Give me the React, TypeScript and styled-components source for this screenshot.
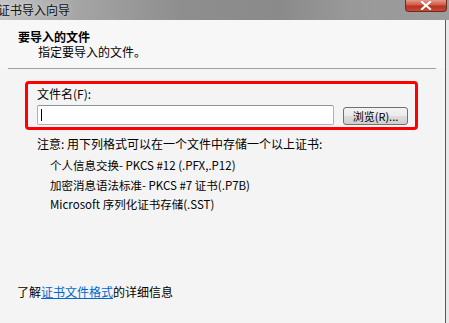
import React from 'react';
import styled, { createGlobalStyle } from 'styled-components';

// == styles =======================================================================================
const GlobalStyle = createGlobalStyle`
  html, body {
    margin: 0;
    padding: 0;
    background: #f2f2f2;
  }
  body {
    font-family: "Noto Sans CJK SC", "Liberation Sans", sans-serif;
    font-size: 12px;
    color: #000;
  }
`;

const Window = styled.div`
  width: 449px;
  height: 323px;
  display: flex;
  flex-direction: column;
  overflow: hidden;
`;

const TitleBar = styled.div`
  height: 20px;
  flex: 0 0 20px;
  display: flex;
  align-items: flex-start;
  background: linear-gradient( 90deg, #c4c4c4 0%, #a4a4a4 18%, #8e8e8e 40%, #8a8a8a 62%, #999 78%, #9c9c9c 100% );
`;

const Title = styled.div`
  margin-left: -2px;
  line-height: 20px;
  font-size: 12px;
  color: #111;
  text-shadow: 0 0 4px rgba( 255, 255, 255, 0.6 );
`;

const CloseButton = styled.div`
  margin-left: auto;
  margin-right: 2px;
  width: 42px;
  height: 12px;
  display: flex;
  align-items: center;
  justify-content: center;
  border: 1px solid #6b2a22;
  border-top: none;
  border-radius: 0 0 4px 4px;
  background: linear-gradient( 180deg, #e49a8c 0%, #d05a48 45%, #b8321e 55%, #c94a35 100% );
  box-sizing: border-box;
`;

const Frame = styled.div`
  flex: 1;
  display: flex;
`;

const Page = styled.div`
  flex: 1;
  display: flex;
  flex-direction: column;
  background: #f4f4f4;
  border-right: 1px solid #5a5a5a;
`;

const RightEdge = styled.div`
  width: 3px;
  background: #e8e8e8;
`;

const Header = styled.div`
  height: 48px;
  box-sizing: border-box;
  padding: 11px 0 0 18px;
  background: #f7f7f7;
`;

const HeaderTitle = styled.div`
  font-weight: bold;
  line-height: 12px;
`;

const HeaderSub = styled.div`
  margin: 3px 0 0 20px;
  line-height: 12px;
`;

const Separator = styled.div`
  height: 1px;
  margin: 0 9px 0 8px;
  background: #a0a0a0;
`;

const Body = styled.div`
  display: flex;
  flex-direction: column;
  padding: 12px 0 0 25px;
`;

const Highlight = styled.div`
  width: 393px;
  height: 49px;
  box-sizing: border-box;
  border: 3px solid #ff0000;
  border-radius: 4px;
  padding: 3px 0 0 9px;
`;

const FieldLabel = styled.div`
  line-height: 14px;
  height: 18px;
`;

const FieldRow = styled.div`
  display: flex;
  align-items: flex-start;
  gap: 9px;
`;

const TextInput = styled.div`
  width: 297px;
  height: 20px;
  box-sizing: border-box;
  border: 1px solid #abb2bd;
  border-top-color: #8e95a2;
  border-radius: 2px;
  background: #fff;
  padding: 3px 0 0 3px;
`;

const Caret = styled.div`
  width: 1px;
  height: 12px;
  background: #000;
`;

const Button = styled.div`
  margin-top: 2px;
  width: 65px;
  height: 18px;
  box-sizing: border-box;
  border: 1px solid #707070;
  border-radius: 3px;
  background: linear-gradient( 180deg, #f2f2f2 0%, #ebebeb 48%, #dddddd 52%, #cfcfcf 100% );
  font-size: 11px;
  line-height: 16px;
  text-align: center;
  white-space: nowrap;
`;

const Note = styled.div`
  margin: 7px 0 0 12px;
  line-height: 14px;
`;

const FormatList = styled.div`
  display: flex;
  flex-direction: column;
  gap: 5.5px;
  margin: 7px 0 0 25px;
`;

const FormatItem = styled.div`
  line-height: 14px;
  font-size: 11.5px;
`;

const Footer = styled.div`
  margin: auto 0 24px 17px;
  line-height: 14px;
`;

const Link = styled.a`
  color: #0066cc;
  text-decoration: underline;
  cursor: pointer;
`;

// == element ======================================================================================
const formats = [
  '个人信息交换- PKCS #12 (.PFX,.P12)',
  '加密消息语法标准- PKCS #7 证书(.P7B)',
  'Microsoft 序列化证书存储(.SST)'
];

export default function App(): JSX.Element {
  return (
    <Window>
      <GlobalStyle />
      <TitleBar>
        <Title>证书导入向导</Title>
        <CloseButton>
          <svg width="12" height="9" viewBox="0 0 12 9">
            <path d="M2 1 L10 8 M10 1 L2 8" stroke="#fff" strokeWidth="2.2" strokeLinecap="square" />
          </svg>
        </CloseButton>
      </TitleBar>
      <Frame>
        <Page>
          <Header>
            <HeaderTitle>要导入的文件</HeaderTitle>
            <HeaderSub>指定要导入的文件。</HeaderSub>
          </Header>
          <Separator />
          <Body>
            <Highlight>
              <FieldLabel>文件名(F):</FieldLabel>
              <FieldRow>
                <TextInput><Caret /></TextInput>
                <Button>浏览(R)...</Button>
              </FieldRow>
            </Highlight>
            <Note>注意: 用下列格式可以在一个文件中存储一个以上证书:</Note>
            <FormatList>
              { formats.map( ( f ) => <FormatItem key={ f }>{ f }</FormatItem> ) }
            </FormatList>
          </Body>
          <Footer>
            了解<Link>证书文件格式</Link>的详细信息
          </Footer>
        </Page>
        <RightEdge />
      </Frame>
    </Window>
  );
}
